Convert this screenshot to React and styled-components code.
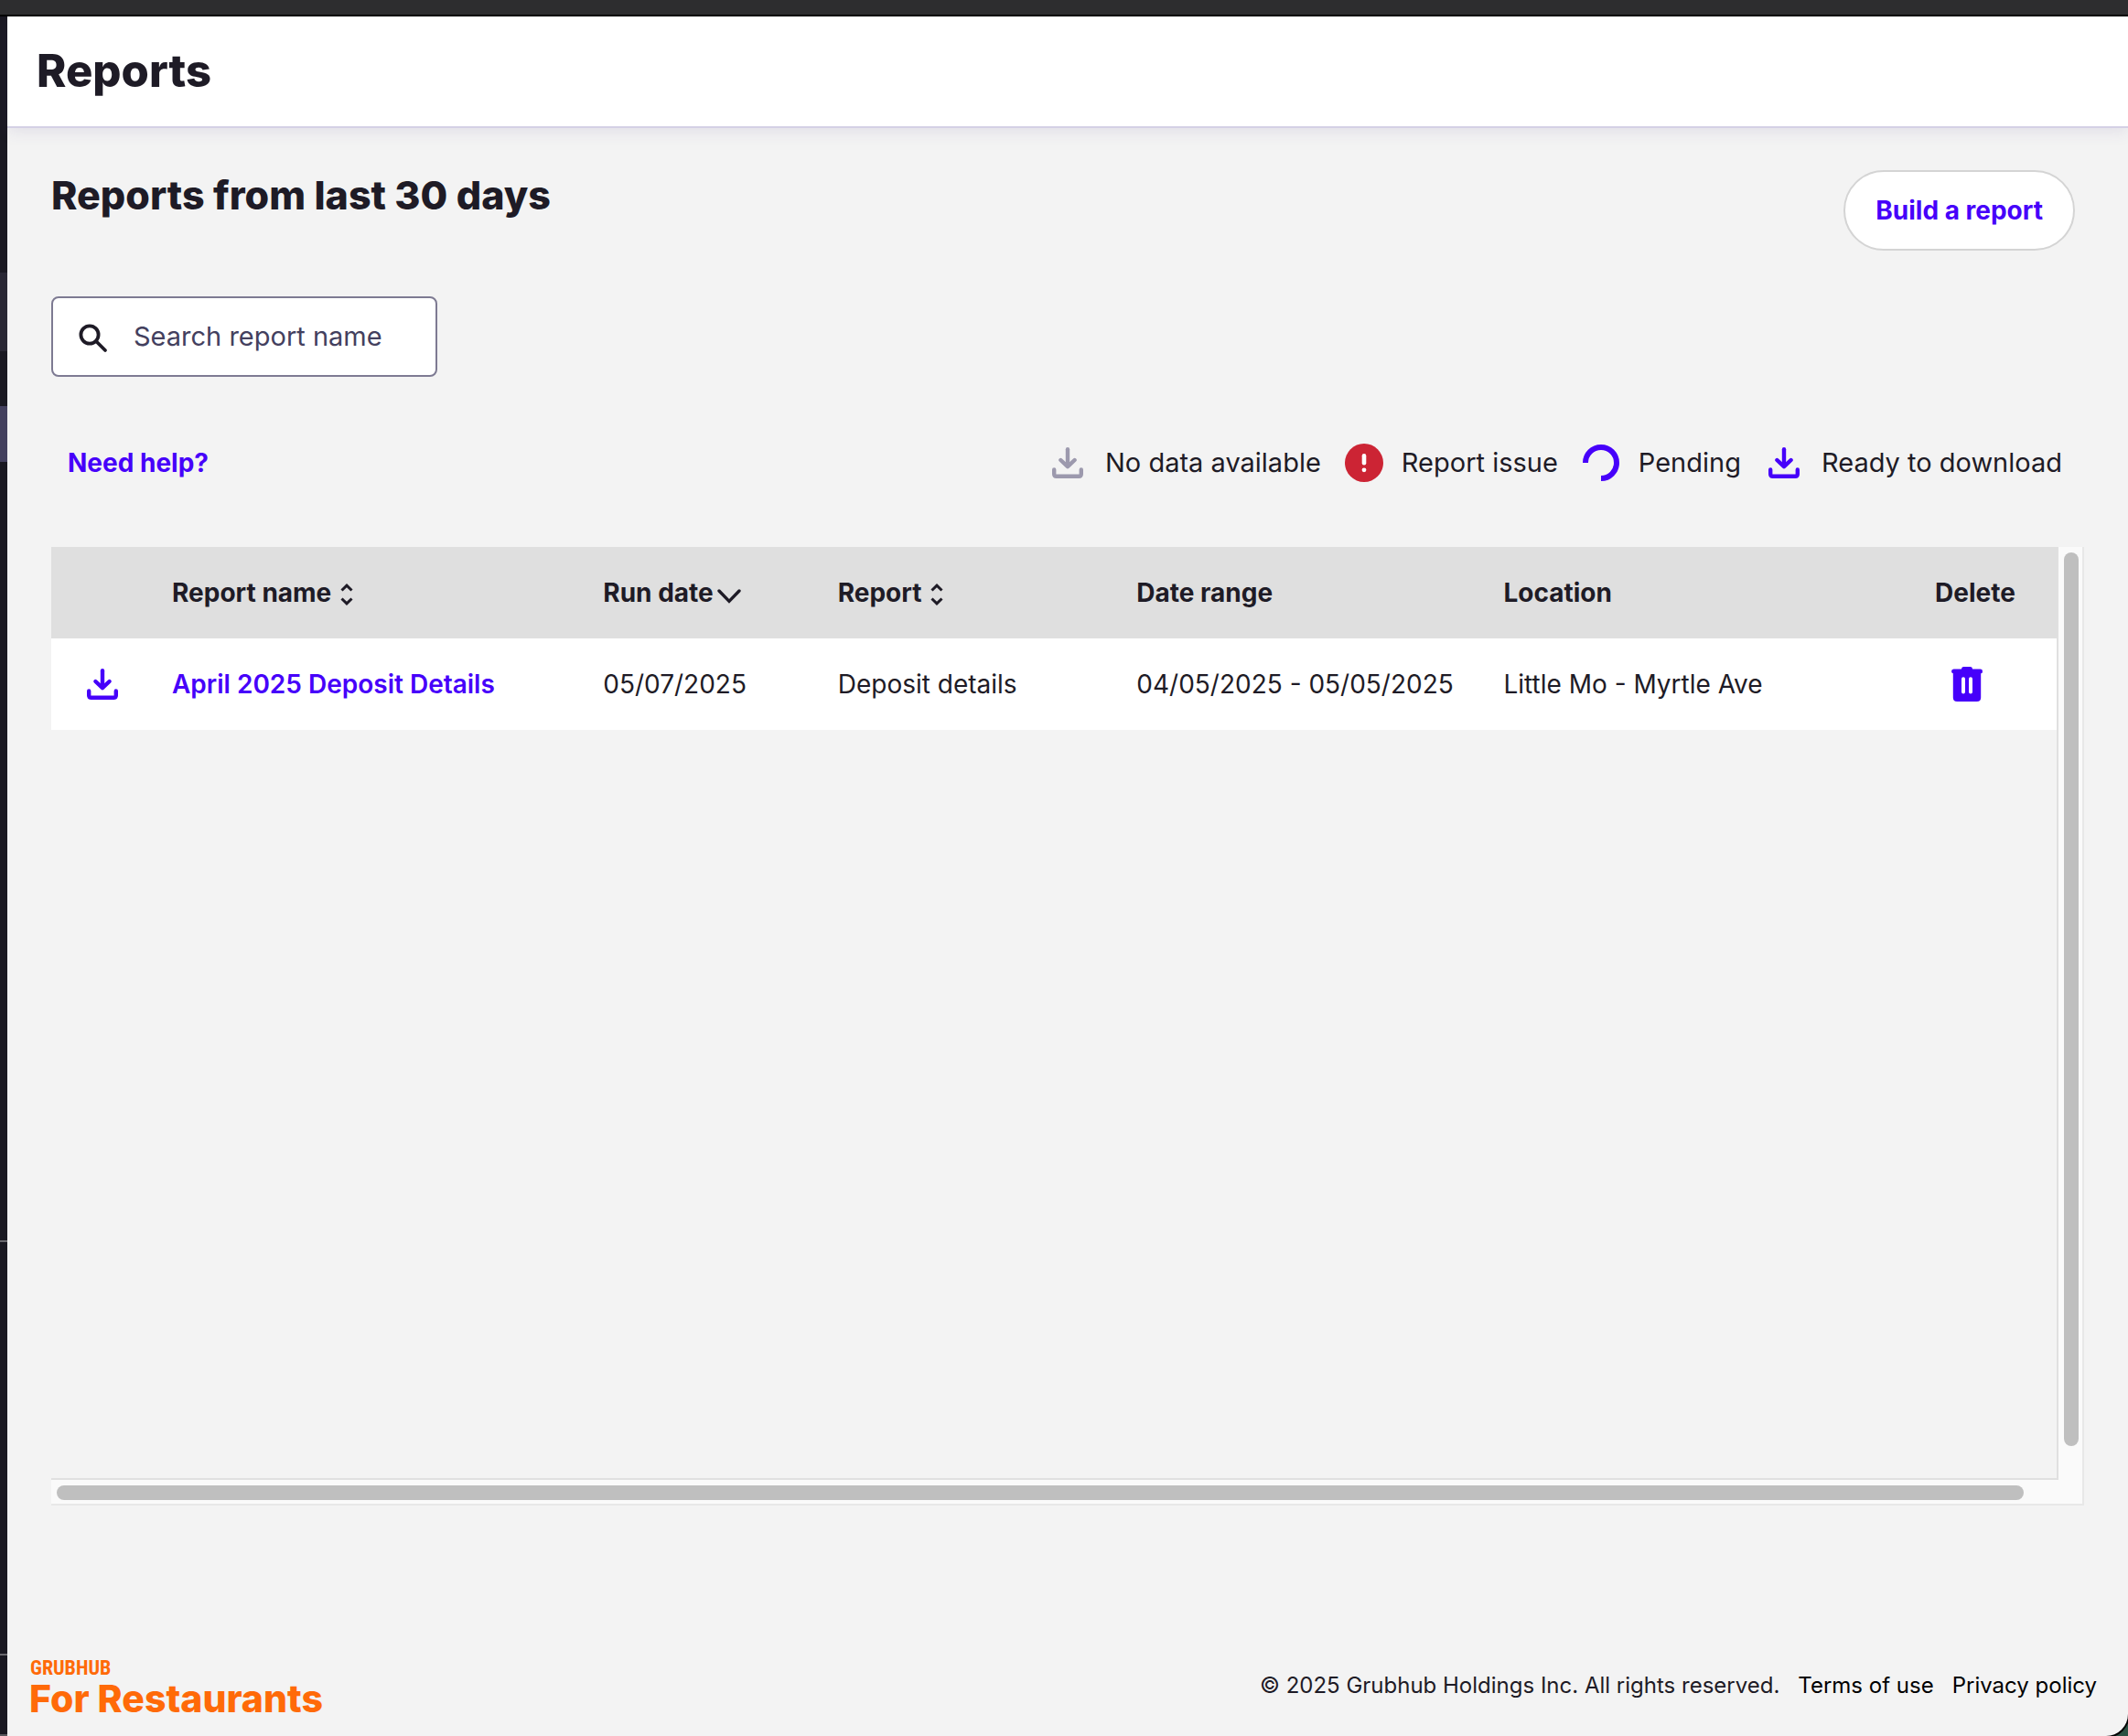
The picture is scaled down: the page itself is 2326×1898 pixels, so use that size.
import React from "react";
import styled, { createGlobalStyle } from "styled-components";

const INK = "#1e1b26";
const VIOLET = "#4600fa";
const SANS = `Inter, "Liberation Sans", sans-serif`;

const GlobalStyle = createGlobalStyle`
  *, *::before, *::after { box-sizing: border-box; }
  body {
    margin: 0;
    background: #2b5244;
    color: ${INK};
    font-family: ${SANS};
    font-size: 28px;
    line-height: 36px;
  }
`;

const Shell = styled.div`
  min-height: 100vh;
  display: flex;
  flex-direction: column;
  overflow: hidden;
`;

const WindowBar = styled.div`
  height: 18px;
  flex: none;
  background: #2d2d2f;
  border-bottom: 2px solid #222224;
`;

const Body = styled.div`
  flex: 1;
  display: flex;
  border-radius: 0 0 24px 0;
  box-shadow: 0 0 0 2px #000;
  overflow: hidden;
  background: #f3f3f3;
`;

const Rail = styled.div`
  width: 8px;
  flex: none;
  background: #1a1922;
  border-bottom: 2px solid #58575c;
`;

const RailMark = styled.div`
  height: ${(p) => p.$height}px;
  margin-top: ${(p) => p.$gap}px;
  background: ${(p) => p.$color};
`;

const Page = styled.div`
  flex: 1;
  min-width: 0;
  display: flex;
  flex-direction: column;
`;

const Header = styled.header`
  height: 122px;
  flex: none;
  display: flex;
  align-items: center;
  padding: 0 32px;
  background: #fff;
  border-bottom: 2px solid #d4d0e5;
  box-shadow: 0 4px 16px rgba(80, 60, 140, 0.1);
`;

const Title = styled.h1`
  margin: 0;
  font-size: 49px;
  line-height: 60px;
  font-weight: 800;
`;

const Main = styled.main`
  flex: 1;
  display: flex;
  flex-direction: column;
  padding: 46px 48px 0;
`;

const Intro = styled.div`
  display: flex;
  justify-content: space-between;
  align-items: flex-start;
  padding-right: 10px;
`;

const Subtitle = styled.h2`
  margin: 0;
  font-size: 43px;
  line-height: 54px;
  font-weight: 800;
`;

const BuildButton = styled.button`
  height: 88px;
  padding: 0 33px;
  border: 2px solid #d4d4d4;
  border-radius: 44px;
  background: #fff;
  color: ${VIOLET};
  font: 700 28px/36px ${SANS};
  cursor: pointer;
`;

const SearchBox = styled.label`
  display: flex;
  align-items: center;
  gap: 28px;
  width: 422px;
  height: 88px;
  margin-top: 50px;
  padding: 0 28px;
  border: 2px solid #7d7a92;
  border-radius: 8px;
  background: #fff;
`;

const SearchInput = styled.input`
  flex: 1;
  min-width: 0;
  padding: 0;
  border: 0;
  outline: 0;
  background: none;
  color: ${INK};
  font: 400 29px/36px ${SANS};
  &::placeholder { color: #43405e; opacity: 1; }
`;

const Tools = styled.div`
  display: flex;
  justify-content: space-between;
  align-items: center;
  height: 48px;
  margin: 70px 24px 68px 18px;
`;

const HelpLink = styled.a`
  color: ${VIOLET};
  font-weight: 700;
  text-decoration: none;
`;

const Legend = styled.ul`
  display: flex;
  gap: 26px;
  margin: 0;
  padding: 0;
  list-style: none;
  font-size: 29px;
`;

const LegendItem = styled.li`
  display: flex;
  align-items: center;
  gap: 20px;
`;

const LegendIcon = styled.span`
  display: flex;
  justify-content: center;
  width: 42px;
`;

const Panel = styled.section`
  flex: 1;
  display: grid;
  grid-template-columns: minmax(0, 1fr) 28px;
  grid-template-rows: minmax(0, 1fr) 28px;
  background: #fafafa;
`;

const Viewport = styled.div`
  min-height: 240px;
  background: #f3f3f3;
  border: solid #e0e0e0;
  border-width: 0 2px 2px 0;
`;

const VerticalTrack = styled.div`
  padding: 6px 4px 37px 6px;
  border-right: 2px solid #e8e8e8;
`;

const HorizontalTrack = styled.div`
  padding: 6px 38px 4px 6px;
  border-bottom: 2px solid #e8e8e8;
`;

const TrackCorner = styled.div`
  border: solid #e8e8e8;
  border-width: 0 2px 2px 0;
`;

const Thumb = styled.div`
  width: 100%;
  height: 100%;
  border-radius: 8px;
  background: #bfbfbf;
`;

const Table = styled.table`
  width: 100%;
  table-layout: fixed;
  border-collapse: collapse;
`;

const Col = styled.col`
  width: ${(p) => p.$width};
`;

const HeadRow = styled.tr`
  height: 100px;
  background: #dfdfdf;
`;

const DataRow = styled.tr`
  height: 100px;
  background: #fff;
`;

const HeadCell = styled.th`
  padding: 0 0 0 28px;
  text-align: left;
  font-weight: 700;
  white-space: nowrap;
`;

const Cell = styled.td`
  padding: 0 0 0 ${(p) => p.$inset || 28}px;
  white-space: nowrap;
`;

const SortButton = styled.button`
  display: flex;
  align-items: center;
  gap: ${(p) => p.$gap}px;
  padding: 0;
  border: 0;
  background: none;
  color: inherit;
  font: inherit;
  cursor: pointer;
`;

const IconButton = styled.button`
  display: block;
  padding: 0;
  border: 0;
  background: none;
  cursor: pointer;
`;

const Icon = styled.svg`
  display: block;
  flex: none;
  margin-top: ${(p) => p.$drop || 0}px;
`;

const ReportLink = styled.a`
  color: ${VIOLET};
  font-weight: 600;
  text-decoration: none;
`;

const Footer = styled.footer`
  display: flex;
  justify-content: space-between;
  align-items: flex-end;
  padding: 166px 34px 20px 24px;
`;

const Brand = styled.div`
  color: #ff6a08;
`;

const BrandName = styled.div`
  padding-left: 1px;
  font: 700 22px/24px "Liberation Sans Narrow", "Roboto Condensed", "DejaVu Sans Condensed", sans-serif;
`;

const BrandLine = styled.div`
  font-size: 41px;
  line-height: 42px;
  font-weight: 800;
`;

const Legal = styled.div`
  display: flex;
  gap: 20px;
  padding-bottom: 19px;
  font-size: 24px;
  line-height: 32px;
`;

const LegalLink = styled.a`
  color: #000;
  text-decoration: none;
`;

const DownloadIcon = ({ color = VIOLET }) => (
  <Icon width="34" height="34" viewBox="0 0 34 34" fill="none" stroke={color} strokeWidth="4.4" strokeLinecap="round" strokeLinejoin="round" aria-hidden="true">
    <path d="M17 2.2V20" />
    <path d="M9.4 14 17 21.2 24.6 14" />
    <path d="M14 18.4H20L17 21.2Z" fill={color} strokeWidth="2" />
    <path d="M2.2 24.5V29.3Q2.2 31.8 4.7 31.8H29.3Q31.8 31.8 31.8 29.3V24.5" />
  </Icon>
);

const AlertIcon = () => (
  <Icon width="42" height="42" viewBox="0 0 42 42" aria-hidden="true">
    <circle cx="21" cy="21" r="21" fill="#cc2434" />
    <path d="M21 13.3V21.2" stroke="#fff" strokeWidth="4.6" strokeLinecap="round" />
    <circle cx="21" cy="28.8" r="2.4" fill="#fff" />
  </Icon>
);

const PendingIcon = () => (
  <Icon width="40" height="40" viewBox="0 0 40 40" fill="none" stroke={VIOLET} strokeWidth="6" aria-hidden="true">
    <path d="M3 20A17 17 0 1 1 20 37" />
  </Icon>
);

const SearchIcon = () => (
  <Icon $drop={4} width="32" height="32" viewBox="0 0 32 32" fill="none" stroke={INK} strokeLinecap="round" aria-hidden="true">
    <circle cx="12" cy="12" r="9.6" strokeWidth="3.8" />
    <path d="M19 19 29 29" strokeWidth="3.8" />
  </Icon>
);

const SortIcon = () => (
  <Icon $drop={4} width="14" height="24" viewBox="0 0 14 24" fill="none" stroke={INK} strokeWidth="3" aria-hidden="true">
    <path d="M1.5 7.5 7 2.2 12.5 7.5" />
    <path d="M1.5 16.5 7 21.8 12.5 16.5" />
  </Icon>
);

const ChevronIcon = () => (
  <Icon $drop={8} width="26" height="16" viewBox="0 0 26 16" fill="none" stroke={INK} strokeWidth="3.4" strokeLinecap="round" aria-hidden="true">
    <path d="M2 2 13 13.4 24 2" />
  </Icon>
);

const TrashIcon = () => (
  <Icon width="34" height="38" viewBox="0 0 34 38" aria-hidden="true">
    <path
      fill={VIOLET}
      d="M13 0H21Q23 0 23 2.6H31.5Q34 2.6 34 5T32.2 7.2V33.5Q32.2 38 27.7 38H6.3Q1.8 38 1.8 33.5V7.2Q0 7 0 5T2.5 2.6H11Q11 0 13 0Z"
    />
    <path d="M13 13.2V27.4M21 13.2V27.4" stroke="#fff" strokeWidth="4" strokeLinecap="round" />
  </Icon>
);

const legend = [
  { label: "No data available", icon: <DownloadIcon color="#9c99ad" /> },
  { label: "Report issue", icon: <AlertIcon /> },
  { label: "Pending", icon: <PendingIcon /> },
  { label: "Ready to download", icon: <DownloadIcon /> },
];

const reports = [
  {
    name: "April 2025 Deposit Details",
    runDate: "05/07/2025",
    type: "Deposit details",
    range: "04/05/2025 - 05/05/2025",
    location: "Little Mo - Myrtle Ave",
  },
];

export default function App() {
  return (
    <>
      <GlobalStyle />
      <Shell>
        <WindowBar />
        <Body>
          <Rail>
            <RailMark $gap={280} $height={86} $color="#292734" />
            <RailMark $gap={60} $height={61} $color="#43405e" />
            <RailMark $gap={851} $height={2} $color="#6a696e" />
            <RailMark $gap={450} $height={2} $color="#6a696e" />
          </Rail>
          <Page>
            <Header>
              <Title>Reports</Title>
            </Header>
            <Main>
              <Intro>
                <Subtitle>Reports from last 30 days</Subtitle>
                <BuildButton type="button">Build a report</BuildButton>
              </Intro>
              <SearchBox htmlFor="report-search">
                <SearchIcon />
                <SearchInput id="report-search" type="text" aria-label="Search report name" placeholder="Search report name" />
              </SearchBox>
              <Tools>
                <HelpLink href="#help">Need help?</HelpLink>
                <Legend>
                  {legend.map((item) => (
                    <LegendItem key={item.label}>
                      <LegendIcon>{item.icon}</LegendIcon>
                      {item.label}
                    </LegendItem>
                  ))}
                </Legend>
              </Tools>
              <Panel>
                <Viewport>
                  <Table>
                    <colgroup>
                      <Col $width="104px" />
                      <Col $width="21.5%" />
                      <Col $width="11.7%" />
                      <Col $width="14.9%" />
                      <Col $width="18.3%" />
                      <Col />
                      <Col $width="161px" />
                    </colgroup>
                    <thead>
                      <HeadRow>
                        <HeadCell aria-label="Download" />
                        <HeadCell>
                          <SortButton type="button" $gap={10}>Report name<SortIcon /></SortButton>
                        </HeadCell>
                        <HeadCell aria-sort="descending">
                          <SortButton type="button" $gap={4}>Run date<ChevronIcon /></SortButton>
                        </HeadCell>
                        <HeadCell>
                          <SortButton type="button" $gap={10}>Report<SortIcon /></SortButton>
                        </HeadCell>
                        <HeadCell>Date range</HeadCell>
                        <HeadCell>Location</HeadCell>
                        <HeadCell>Delete</HeadCell>
                      </HeadRow>
                    </thead>
                    <tbody>
                      {reports.map((r) => (
                        <DataRow key={r.name}>
                          <Cell $inset={39}>
                            <IconButton type="button" aria-label="Download report"><DownloadIcon /></IconButton>
                          </Cell>
                          <Cell><ReportLink href="#report">{r.name}</ReportLink></Cell>
                          <Cell>{r.runDate}</Cell>
                          <Cell>{r.type}</Cell>
                          <Cell>{r.range}</Cell>
                          <Cell>{r.location}</Cell>
                          <Cell $inset={46}>
                            <IconButton type="button" aria-label="Delete report"><TrashIcon /></IconButton>
                          </Cell>
                        </DataRow>
                      ))}
                    </tbody>
                  </Table>
                </Viewport>
                <VerticalTrack><Thumb /></VerticalTrack>
                <HorizontalTrack><Thumb /></HorizontalTrack>
                <TrackCorner />
              </Panel>
            </Main>
            <Footer>
              <Brand>
                <BrandName>GRUBHUB</BrandName>
                <BrandLine>For Restaurants</BrandLine>
              </Brand>
              <Legal>
                <span>© 2025 Grubhub Holdings Inc. All rights reserved.</span>
                <LegalLink href="#terms">Terms of use</LegalLink>
                <LegalLink href="#privacy">Privacy policy</LegalLink>
              </Legal>
            </Footer>
          </Page>
        </Body>
      </Shell>
    </>
  );
}
